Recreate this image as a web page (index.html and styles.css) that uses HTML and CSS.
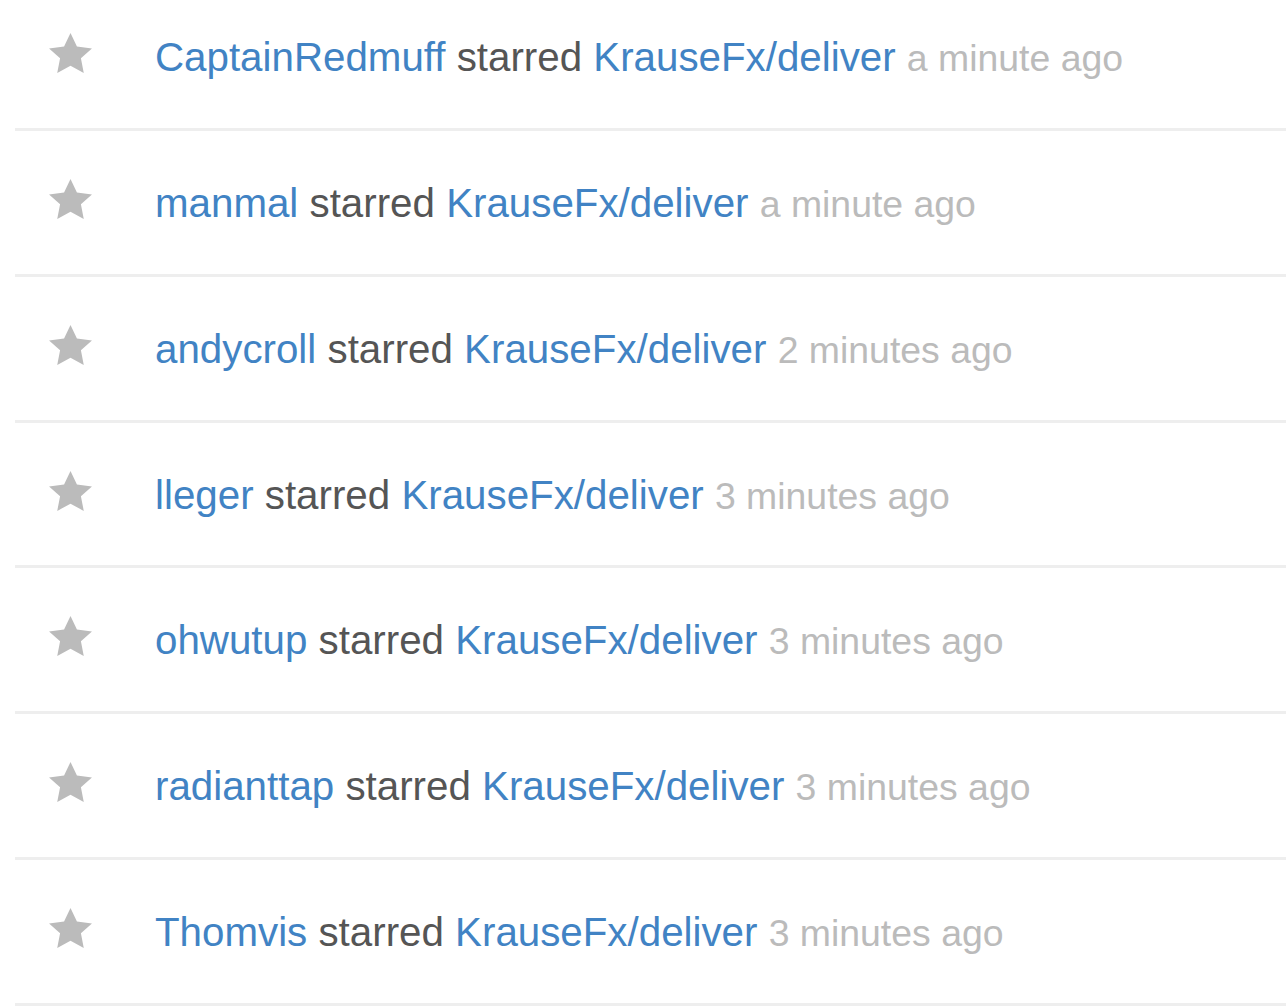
FILE: index.html
```html
<!DOCTYPE html>
<html>
<head>
<meta charset="utf-8">
<link rel="stylesheet" href="styles.css">
</head>
<body>
<div class="feed">
  <div class="alert">
    <svg class="star" viewBox="0 0 14 16"><path d="M14 6l-4.9-.64L7 1 4.9 5.36 0 6l3.6 3.26L2.67 14 7 11.670 11.33 14l-.93-4.74L14 6z"/></svg>
    <div class="title"><a class="link">CaptainRedmuff</a> starred <a class="link">KrauseFx/deliver</a> <span class="time">a minute ago</span></div>
  </div>
  <div class="alert">
    <svg class="star" viewBox="0 0 14 16"><path d="M14 6l-4.9-.64L7 1 4.9 5.36 0 6l3.6 3.26L2.67 14 7 11.67 11.33 14l-.93-4.74L14 6z"/></svg>
    <div class="title"><a class="link">manmal</a> starred <a class="link">KrauseFx/deliver</a> <span class="time">a minute ago</span></div>
  </div>
  <div class="alert">
    <svg class="star" viewBox="0 0 14 16"><path d="M14 6l-4.9-.64L7 1 4.9 5.36 0 6l3.6 3.26L2.67 14 7 11.67 11.33 14l-.93-4.74L14 6z"/></svg>
    <div class="title"><a class="link">andycroll</a> starred <a class="link">KrauseFx/deliver</a> <span class="time">2 minutes ago</span></div>
  </div>
  <div class="alert">
    <svg class="star" viewBox="0 0 14 16"><path d="M14 6l-4.9-.64L7 1 4.9 5.36 0 6l3.6 3.26L2.67 14 7 11.67 11.33 14l-.93-4.74L14 6z"/></svg>
    <div class="title"><a class="link">lleger</a> starred <a class="link">KrauseFx/deliver</a> <span class="time">3 minutes ago</span></div>
  </div>
  <div class="alert">
    <svg class="star" viewBox="0 0 14 16"><path d="M14 6l-4.9-.64L7 1 4.9 5.36 0 6l3.6 3.26L2.67 14 7 11.67 11.33 14l-.93-4.74L14 6z"/></svg>
    <div class="title"><a class="link">ohwutup</a> starred <a class="link">KrauseFx/deliver</a> <span class="time">3 minutes ago</span></div>
  </div>
  <div class="alert">
    <svg class="star" viewBox="0 0 14 16"><path d="M14 6l-4.9-.64L7 1 4.9 5.36 0 6l3.6 3.26L2.67 14 7 11.67 11.33 14l-.93-4.74L14 6z"/></svg>
    <div class="title"><a class="link">radianttap</a> starred <a class="link">KrauseFx/deliver</a> <span class="time">3 minutes ago</span></div>
  </div>
  <div class="alert">
    <svg class="star" viewBox="0 0 14 16"><path d="M14 6l-4.9-.64L7 1 4.9 5.36 0 6l3.6 3.26L2.67 14 7 11.67 11.33 14l-.93-4.74L14 6z"/></svg>
    <div class="title"><a class="link">Thomvis</a> starred <a class="link">KrauseFx/deliver</a> <span class="time">3 minutes ago</span></div>
  </div>
</div>
</body>
</html>
```

FILE: styles.css
```css
html, body {
  margin: 0;
  padding: 0;
  background: #fff;
}
body {
  font-family: "Liberation Sans", Arial, Helvetica, sans-serif;
  overflow: hidden;
}
.feed {
  margin-top: -14.83px;
  margin-left: 15px;
}
.alert {
  display: flex;
  align-items: flex-start;
  padding: 43px 0 39.83px 34px;
  border-bottom: 3px solid #eeeeee;
}
.star {
  width: 43px;
  height: 49px;
  margin-top: 2px;
  fill: #bbbbbb;
  flex: none;
}
.title {
  margin-left: 63px;
  font-size: 40.3px;
  line-height: 60px;
  color: #555555;
  white-space: nowrap;
}
.link {
  color: #4183c4;
  text-decoration: none;
}
.time {
  font-size: 37.4px;
  color: #bbbbbb;
}
```
